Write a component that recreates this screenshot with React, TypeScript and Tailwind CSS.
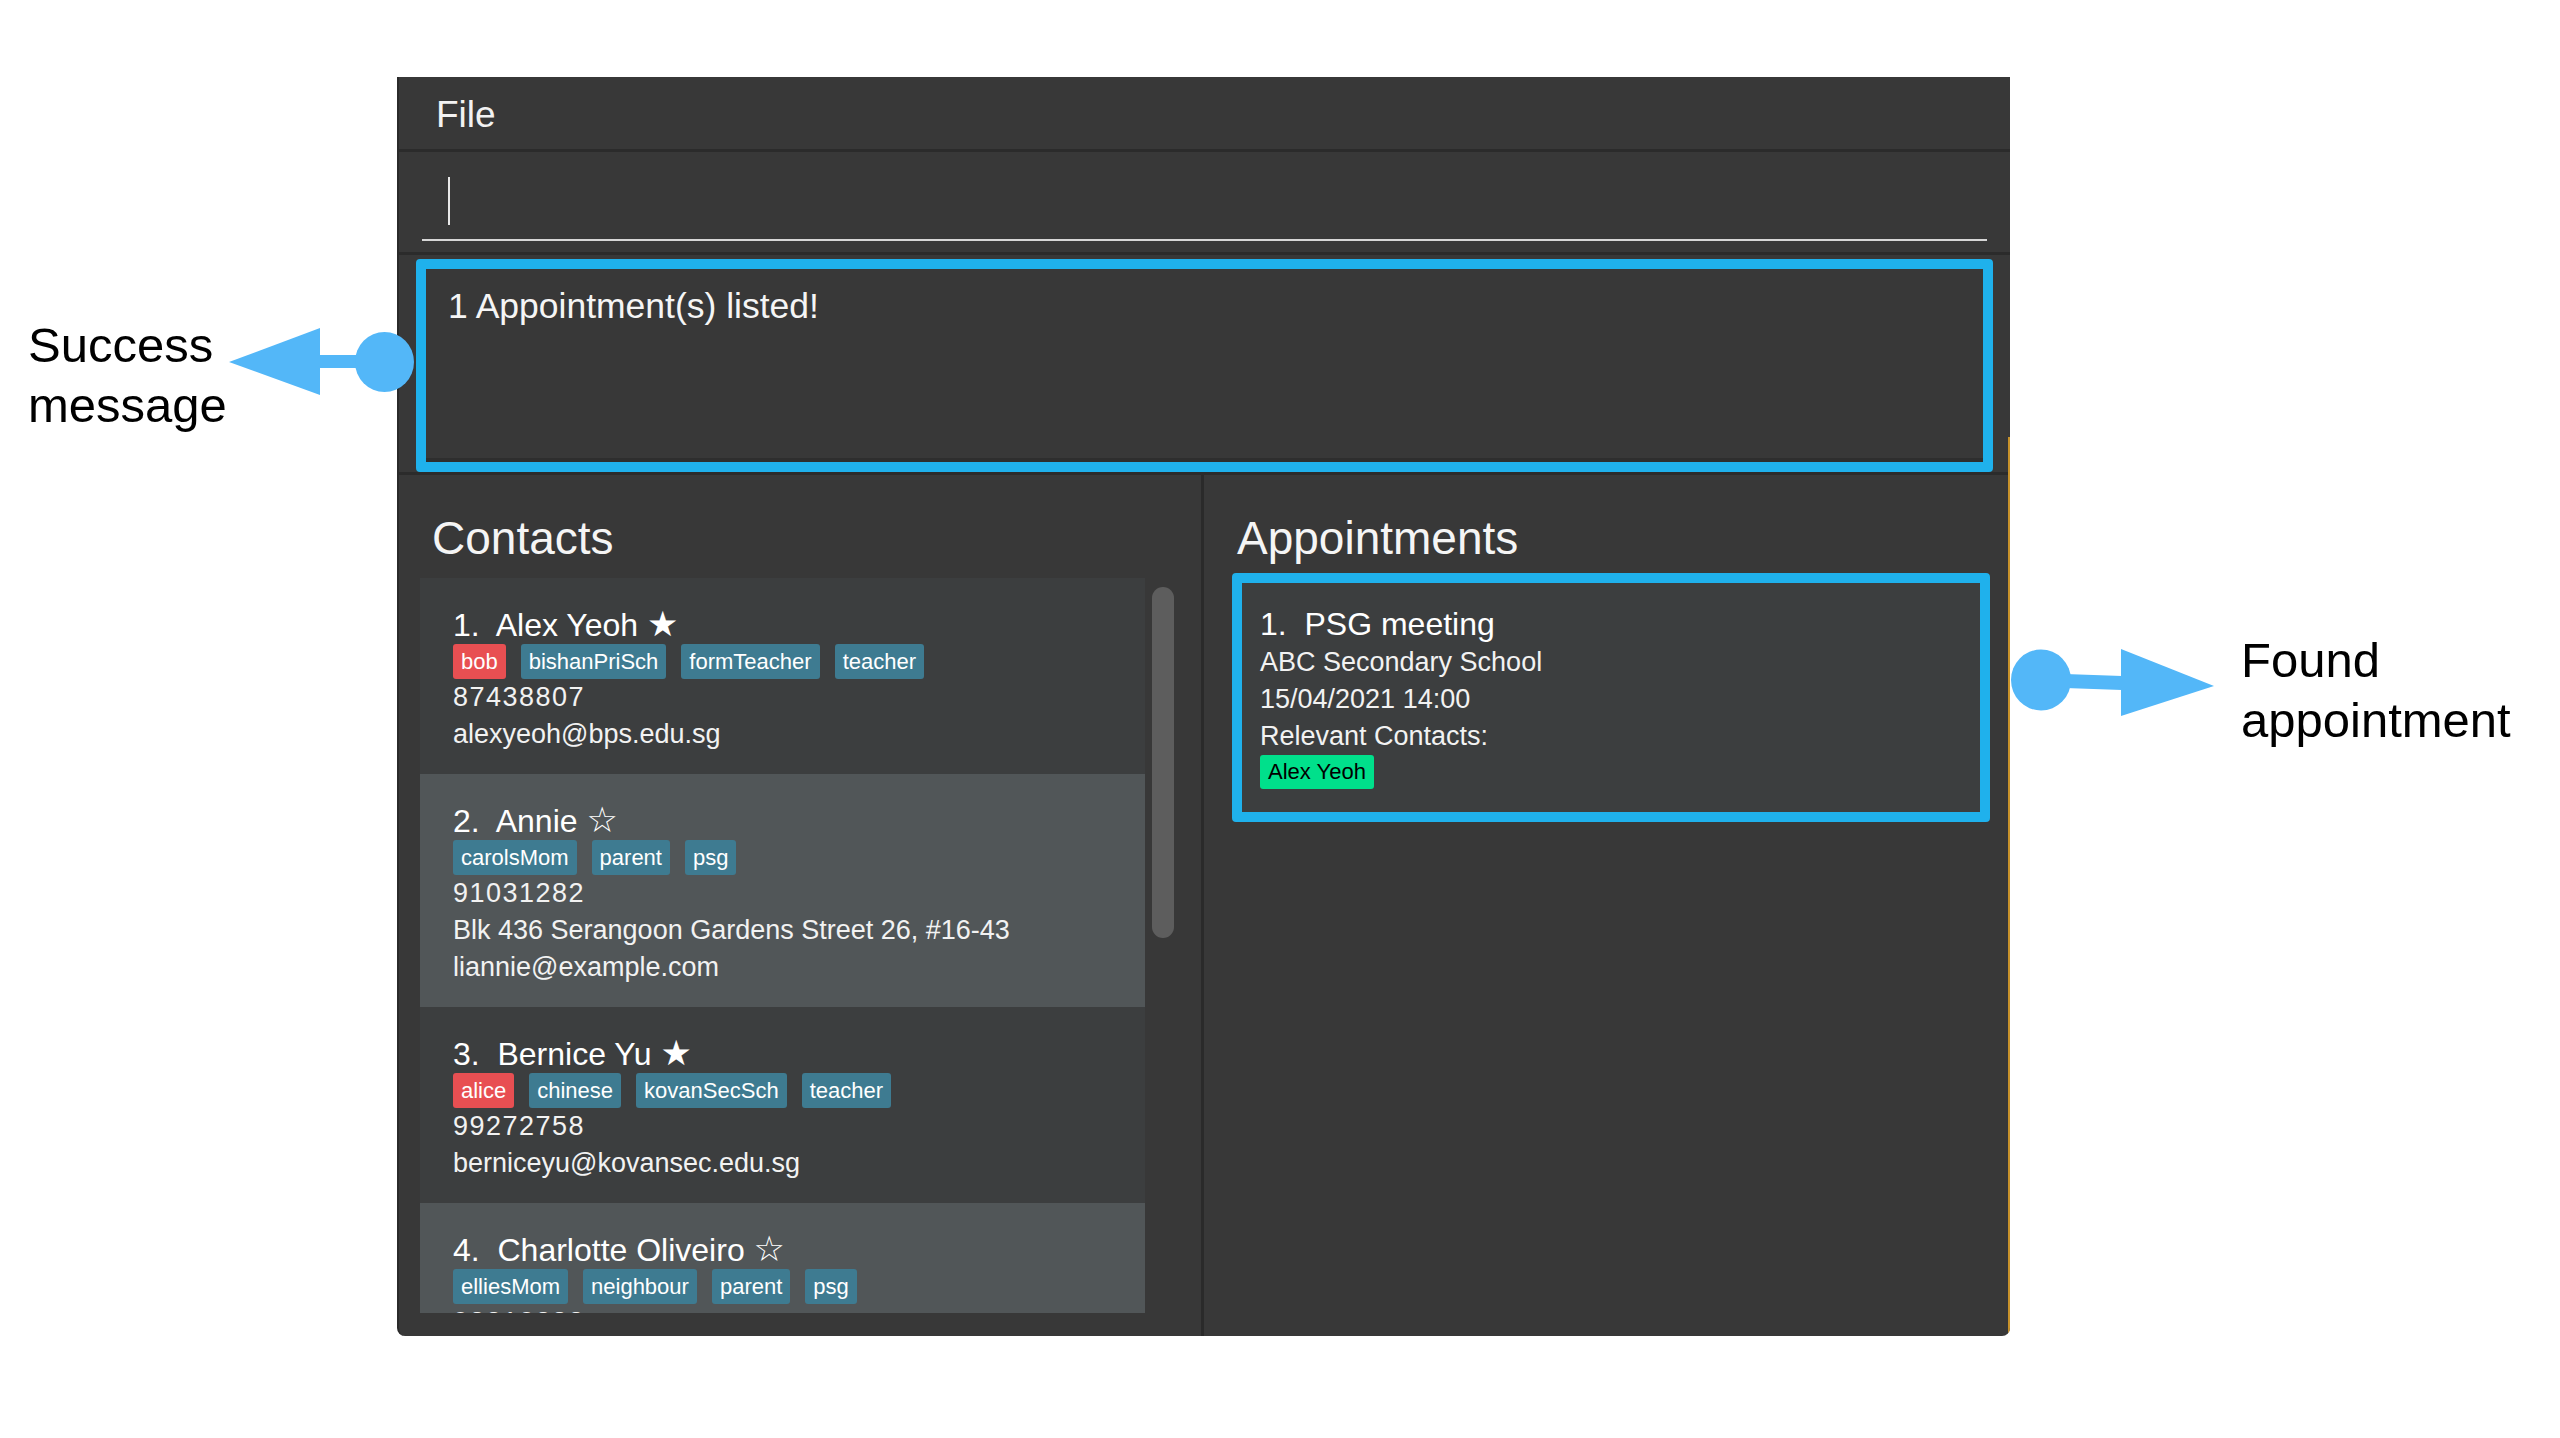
import React from "react";

type Tag = { t: string; red?: boolean };
type Contact = {
  idx: number;
  name: string;
  fav: boolean;
  tags: Tag[];
  phone: string;
  lines: string[];
};

const contacts: Contact[] = [
  {
    idx: 1,
    name: "Alex Yeoh",
    fav: true,
    tags: [{ t: "bob", red: true }, { t: "bishanPriSch" }, { t: "formTeacher" }, { t: "teacher" }],
    phone: "87438807",
    lines: ["alexyeoh@bps.edu.sg"],
  },
  {
    idx: 2,
    name: "Annie",
    fav: false,
    tags: [{ t: "carolsMom" }, { t: "parent" }, { t: "psg" }],
    phone: "91031282",
    lines: ["Blk 436 Serangoon Gardens Street 26, #16-43", "liannie@example.com"],
  },
  {
    idx: 3,
    name: "Bernice Yu",
    fav: true,
    tags: [{ t: "alice", red: true }, { t: "chinese" }, { t: "kovanSecSch" }, { t: "teacher" }],
    phone: "99272758",
    lines: ["berniceyu@kovansec.edu.sg"],
  },
  {
    idx: 4,
    name: "Charlotte Oliveiro",
    fav: false,
    tags: [{ t: "elliesMom" }, { t: "neighbour" }, { t: "parent" }, { t: "psg" }],
    phone: "93210283",
    lines: ["charlotte@example.com"],
  },
];

function TagPill({ tag }: { tag: Tag }) {
  return (
    <span
      className={
        "h-[35px] px-2 text-[22px] leading-[35px] rounded-[3px] text-white " +
        (tag.red ? "bg-[#e84f52]" : "bg-[#3e7b91]")
      }
    >
      {tag.t}
    </span>
  );
}

function ContactCard({ c }: { c: Contact }) {
  return (
    <div
      className={
        "pl-[33px] pt-[30px] pb-[21px] shrink-0 " +
        (c.idx % 2 === 1 ? "bg-[#3c3e3f]" : "bg-[#515658]")
      }
    >
      <div className="h-[32px] text-[32px] leading-[32px] text-white whitespace-pre">
        {c.idx}.  {c.name}{" "}
        <span className="font-['DejaVu_Sans',sans-serif] text-[35px] leading-[32px]">{c.fav ? "★" : "☆"}</span>
      </div>
      <div className="mt-[4px] flex gap-[15px]">
        {c.tags.map((t) => (
          <TagPill key={t.t} tag={t} />
        ))}
      </div>
      <div className="text-[27px] leading-[37px] text-[#f2f2f2] tracking-[1.5px]">{c.phone}</div>
      {c.lines.map((l) => (
        <div key={l} className="text-[27px] leading-[37px] text-[#f2f2f2]">
          {l}
        </div>
      ))}
    </div>
  );
}

export default function App() {
  return (
    <div className="relative w-[2560px] h-[1438px] bg-white overflow-hidden font-['Liberation_Sans',Arial,sans-serif]">
      {/* Window */}
      <div className="absolute left-[397px] top-[77px] w-[1613px] h-[1259px] bg-[#383838] flex flex-col rounded-b-[8px] overflow-hidden border-l-2 border-[#2a2a2a]">
        {/* Menu bar */}
        <div className="h-[75px] shrink-0 pl-[37px] pt-[19px] border-b-[3px] border-[#2b2b2b] bg-[#383838]">
          <span className="text-[37px] leading-[37px] text-[#f2f2f2]">File</span>
        </div>
        {/* Command box */}
        <div className="h-[103px] shrink-0 px-[23px] pt-[25px] border-b-[3px] border-[#2b2b2b]">
          <div className="h-[48px] pl-[26px]">
            <div className="w-[2px] h-[48px] bg-[#e8e8e8]" />
          </div>
          <div className="mt-[14px] h-[2px] bg-[#d6d6d6]" />
        </div>
        {/* Result display */}
        <div className="shrink-0 pt-[4px] px-[17px] border-b-[3px] border-[#2b2b2b]">
          <div className="h-[213px] border-[10px] border-[#1fb1ec] rounded-[4px] bg-[#383838] flex flex-col">
            <div className="flex-1 pl-[22px] pt-[20px] text-[35.5px] leading-[35px] text-[#f5f5f5]">
              1 Appointment(s) listed!
            </div>
            <div className="h-[4px] bg-[#2e2e2e]" />
          </div>
        </div>
        {/* Main split */}
        <div className="flex-1 flex min-h-0">
          {/* Contacts panel */}
          <div className="w-[802px] shrink-0 flex flex-col pt-[40px] pb-[23px]">
            <div className="pl-[33px] text-[46px] leading-[46px] text-[#f5f5f5]">Contacts</div>
            <div className="mt-[17px] flex-1 min-h-0 flex pl-[21px]">
              <div className="w-[725px] h-full overflow-hidden flex flex-col">
                {contacts.map((c) => (
                  <ContactCard key={c.idx} c={c} />
                ))}
              </div>
              <div className="ml-[7px] w-[22px] pt-[9px]">
                <div className="h-[351px] w-[22px] rounded-full bg-[#5d5d5d]" />
              </div>
            </div>
          </div>
          {/* Divider */}
          <div className="w-[3px] shrink-0 bg-[#2a2a2a]" />
          {/* Appointments panel */}
          <div className="flex-1 flex flex-col pt-[40px] relative">
            <div className="pl-[33px] text-[46px] leading-[46px] text-[#f5f5f5]">Appointments</div>
            <div className="mt-[12px] ml-[28px] w-[758px] border-[10px] border-[#1fb1ec] rounded-[4px] bg-[#3c3e3f] pl-[18px] pt-[25px] pb-[23px]">
              <div className="text-[32px] leading-[32px] text-white whitespace-pre">1.  PSG meeting</div>
              <div className="mt-[4px] text-[27px] leading-[37px] text-[#f2f2f2]">ABC Secondary School</div>
              <div className="text-[27px] leading-[37px] text-[#f2f2f2]">15/04/2021 14:00</div>
              <div className="text-[27px] leading-[37px] text-[#f2f2f2]">Relevant Contacts:</div>
              <div className="flex">
                <span className="h-[34px] px-2 text-[22px] leading-[34px] rounded-[3px] bg-[#00e08b] text-black">
                  Alex Yeoh
                </span>
              </div>
            </div>
          </div>
        </div>
        <div className="absolute right-0 top-[360px] bottom-0 w-[2px] bg-[#c8922a]" />
      </div>

      {/* Left annotation */}
      <div className="absolute left-[28px] top-[315px] text-[49px] leading-[60px] text-black">
        <div>Success</div>
        <div>message</div>
      </div>
      <svg className="absolute left-[220px] top-[320px]" width="200" height="80" viewBox="0 0 200 80">
        <polygon points="9,42 100,8 100,75" fill="#53b7f8" />
        <rect x="99" y="35" width="66" height="13" fill="#53b7f8" />
        <ellipse cx="164.5" cy="42" rx="29.5" ry="30" fill="#53b7f8" />
      </svg>

      {/* Right annotation */}
      <svg className="absolute left-[2005px] top-[640px]" width="220" height="85" viewBox="0 0 220 85">
        <ellipse cx="36" cy="40" rx="30" ry="30.5" fill="#53b7f8" />
        <polygon points="60,34 117,36 117,50 60,48" fill="#53b7f8" />
        <polygon points="116,9 209,46 116,76" fill="#53b7f8" />
      </svg>
      <div className="absolute left-[2241px] top-[630px] text-[49px] leading-[60px] text-black">
        <div>Found</div>
        <div>appointment</div>
      </div>
    </div>
  );
}
